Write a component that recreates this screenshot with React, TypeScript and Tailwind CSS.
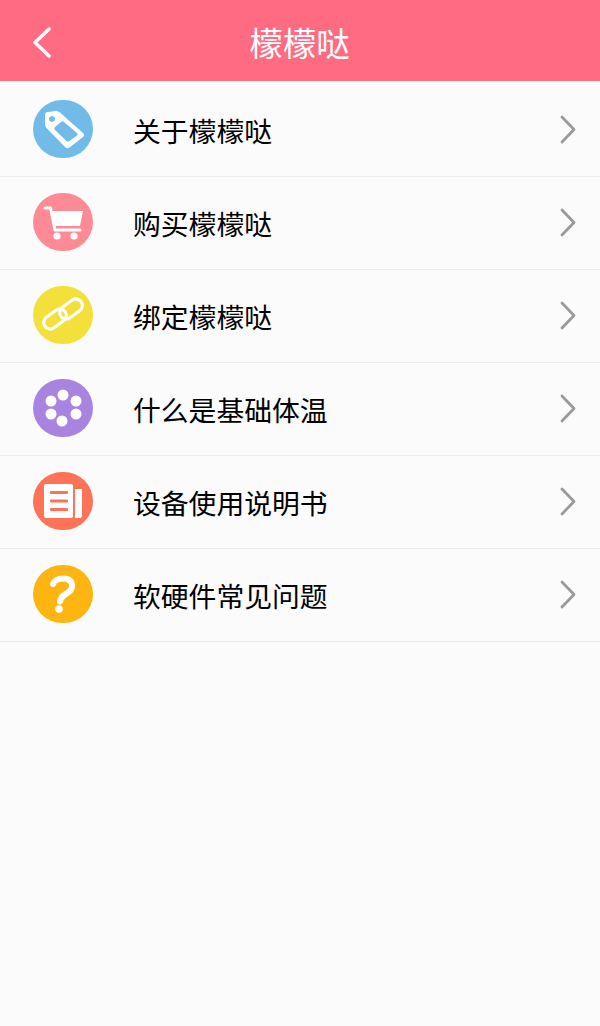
import React from 'react';

const TagIcon = () => (
  <svg viewBox="0 0 60 58" className="w-full h-full">
    <path
      fillRule="evenodd"
      fill="#fff"
      d="M12 15 Q12 12 15 12 L23 11 Q25.500 11 27 12.500 L50 33 Q52 35 50 37 L36.500 47.500 Q34.500 49 32.500 47.500 L13.500 28 Q12 26.500 12 24 Z M19 16 a3 3 0 1 0 0.010 0 Z M31 22 Q29.500 20.500 28 22 L22 27 Q20.500 28.500 22 30 L33.500 41 Q35 42 36.500 41 L44 35.500 Q45.500 34 44 33 Z"
    />
  </svg>
);

const CartIcon = () => (
  <svg viewBox="0 0 60 58" className="w-full h-full">
    <path fill="none" stroke="#fff" strokeWidth="3" strokeLinecap="round" strokeLinejoin="round" d="M12 15 H17.500 L22 37 H47" />
    <path fill="#fff" d="M19 18 H50 L47 33 H22 Z" />
    <circle cx="24" cy="43" r="3.600" fill="#fff" />
    <circle cx="41" cy="43" r="3.600" fill="#fff" />
  </svg>
);

const LinkIcon = () => (
  <svg viewBox="0 0 60 58" className="w-full h-full">
    <g fill="none" stroke="#fff" strokeWidth="3.200">
      <rect x="9.500" y="26.500" width="25" height="13" rx="6.500" transform="rotate(-36 22 33)" />
      <rect x="25.500" y="16.500" width="25" height="13" rx="6.500" transform="rotate(-36 38 23)" />
    </g>
  </svg>
);

const DotsIcon = () => (
  <svg viewBox="0 0 60 58" className="w-full h-full" fill="#fff">
    <circle cx="30" cy="16" r="5.500" />
    <circle cx="18" cy="22" r="5.500" />
    <circle cx="43" cy="22" r="5.500" />
    <circle cx="18" cy="35" r="5.500" />
    <circle cx="43" cy="35" r="5.500" />
    <circle cx="29" cy="42" r="5.500" />
  </svg>
);

const DocIcon = () => (
  <svg viewBox="0 0 60 58" className="w-full h-full">
    <rect x="11" y="12" width="29" height="34" rx="2" fill="#fff" />
    <rect x="17" y="19" width="18" height="3" rx="1" fill="#fd7358" />
    <rect x="17" y="27.500" width="18" height="3" rx="1" fill="#fd7358" />
    <rect x="17" y="36" width="18" height="3" rx="1" fill="#fd7358" />
    <path fill="#fff" d="M42 17 H49 V44 Q49 46 47 46 H42 Z" />
  </svg>
);

const QuestionIcon = () => (
  <svg viewBox="0 0 60 58" className="w-full h-full">
    <path fill="none" stroke="#fff" strokeWidth="6" strokeLinecap="round" strokeLinejoin="round" d="M20 19 Q22.500 13.500 30 13.500 Q39 13.500 39 21 Q39 25.500 33.500 28.500 Q28 31.500 27 36.500" />
    <circle cx="26" cy="44" r="3.800" fill="#fff" />
  </svg>
);

const ITEMS = [
  { label: '关于檬檬哒', color: 'bg-[#72bbe8]', icon: <TagIcon /> },
  { label: '购买檬檬哒', color: 'bg-[#fd8a94]', icon: <CartIcon /> },
  { label: '绑定檬檬哒', color: 'bg-[#f3e03a]', icon: <LinkIcon /> },
  { label: '什么是基础体温', color: 'bg-[#a883e0]', icon: <DotsIcon /> },
  { label: '设备使用说明书', color: 'bg-[#fd7358]', icon: <DocIcon /> },
  { label: '软硬件常见问题', color: 'bg-[#ffb511]', icon: <QuestionIcon /> },
];

export default function App() {
  return (
    <div className="h-[1026px] w-[600px] overflow-hidden bg-[#fbfbfb] font-['Noto_Sans_CJK_SC',sans-serif]">
      <header className="relative flex h-[81px] items-center justify-center bg-[#ff6c82] text-white">
        <svg viewBox="0 0 20 32" className="absolute left-[32px] top-[27px] h-[32px] w-[20px]" fill="none" stroke="#fff" strokeWidth="3.500" strokeLinecap="round" strokeLinejoin="round">
          <path d="M17 2 L3 15.500 L17 29" />
        </svg>
        <h1 className="pr-[1px] pt-[3px] text-[33.5px] leading-none">檬檬哒</h1>
      </header>

      <ul className="pt-[3px]">
        {ITEMS.map((item) => (
          <li key={item.label} className="flex h-[93px] items-center border-b border-[#ebebeb] pl-[33px] pr-[24px]">
            <div className={`mb-[2px] h-[58px] w-[60px] rounded-full ${item.color}`}>{item.icon}</div>
            <span className="ml-[40px] flex-1 pt-[2px] text-[27.8px] leading-none text-black">{item.label}</span>
            <svg viewBox="0 0 16 29" className="mb-[1px] h-[29px] w-[16px]" fill="none" stroke="#9a9a9a" strokeWidth="2.800" strokeLinecap="round" strokeLinejoin="round">
              <path d="M2 2 L14 14.500 L2 27" />
            </svg>
          </li>
        ))}
      </ul>
    </div>
  );
}
